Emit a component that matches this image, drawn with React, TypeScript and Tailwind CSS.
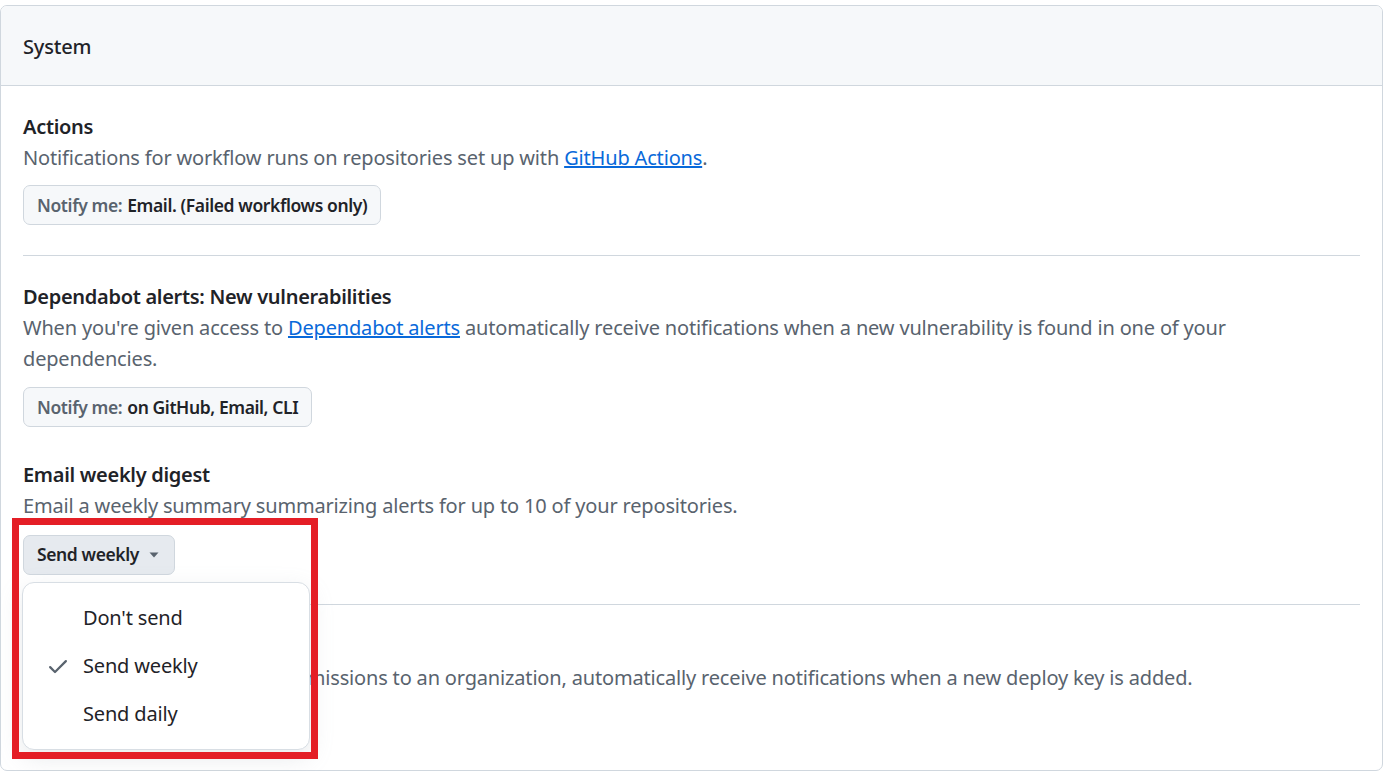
import React from 'react';

const font = { fontFamily: '"Noto Sans", "Open Sans", Arial, sans-serif' };

const NotifyButton: React.FC<{ value: string }> = ({ value }) => (
  <div className="inline-flex h-[40px] items-center rounded-[7px] border border-[#d0d7de] bg-[#f6f8fa] px-[13px] text-[17.5px] font-semibold tracking-[-0.4px]">
    <span className="text-[#59636e]">Notify me:</span>
    <span className="ml-[5px] text-[#1f2328]">{value}</span>
  </div>
);

const options = ["Don't send", 'Send weekly', 'Send daily'];

const App: React.FC = () => {
  return (
    <div className="relative min-h-[771px] bg-white pt-[5px] text-[#1f2328]" style={font}>
      <div className="w-[1383px] h-[766px] overflow-hidden rounded-[7px] border border-[#d0d7de]">
        {/* Header */}
        <div className="flex h-[80px] items-center border-b border-[#d0d7de] bg-[#f6f8fa] px-[22px] pt-[3px]">
          <h2 className="text-[20px] font-medium tracking-[-0.2px]">System</h2>
        </div>

        <div className="px-[22px] text-[20px] leading-[31px] tracking-[-0.17px]">
          {/* Actions */}
          <div className="border-b border-[#d0d7de] pt-[25px] pb-[30px]">
            <h3 className="font-semibold tracking-[-0.3px]">Actions</h3>
            <p className="text-[#59636e]">
              Notifications for workflow runs on repositories set up with{' '}
              <a className="text-[#0969da] underline">GitHub Actions</a>.
            </p>
            <div className="mt-[12px]">
              <NotifyButton value="Email. (Failed workflows only)" />
            </div>
          </div>

          {/* Dependabot */}
          <div className="border-b border-[#d0d7de] pt-[25px] pb-[29px]">
            <h3 className="font-semibold tracking-[-0.3px]">Dependabot alerts: New vulnerabilities</h3>
            <p className="max-w-[1230px] text-[#59636e]">
              When you're given access to{' '}
              <a className="text-[#0969da] underline">Dependabot alerts</a> automatically receive notifications
              when a new vulnerability is found in one of your dependencies.
            </p>
            <div className="mt-[13px]">
              <NotifyButton value="on GitHub, Email, CLI" />
            </div>

            <h3 className="mt-[32px] font-semibold tracking-[-0.3px]">Email weekly digest</h3>
            <p className="text-[#59636e]">
              Email a weekly summary summarizing alerts for up to 10 of your repositories.
            </p>
            <div className="relative mt-[14px]">
              <button className="inline-flex h-[40px] items-center rounded-[7px] border border-[#d0d7de] bg-[#e6eaef] pl-[13px] pr-[15px] text-[17.5px] leading-none font-semibold tracking-[-0.4px] text-[#1f2328]">
                Send weekly
                <svg width="10" height="6" viewBox="0 0 10 6" className="ml-[10px]">
                  <path d="M0.5 0.5h9L5 5.5Z" fill="#59636e" />
                </svg>
              </button>
            </div>
          </div>

          {/* Deploy keys */}
          <div className="pt-[26px]">
            <h3 className="font-semibold tracking-[-0.3px]">Deploy keys</h3>
            <p className="text-[#59636e]">
              When you are given admin permissions to an organization, automatically receive notifications when a new
              deploy key is added.
            </p>
          </div>
        </div>
      </div>

      {/* Dropdown menu */}
      <div className="absolute left-[22px] top-[582px] w-[288px] rounded-[12px] border border-[#d8dee4] bg-white py-[11px] shadow-[0_8px_24px_rgba(140,149,159,0.2)]">
        {options.map((o) => (
          <div key={o} className="flex h-[48px] items-center text-[20px] tracking-[-0.17px] text-[#1f2328]">
            <div className="flex w-[60px] justify-end pr-[13px]">
              {o === 'Send weekly' && (
                <svg width="24" height="24" viewBox="0 0 16 16" fill="#59636e">
                  <path d="M13.78 4.22a.75.75 0 0 1 0 1.06l-7.25 7.25a.75.75 0 0 1-1.06 0L2.22 9.28a.751.751 0 0 1 .018-1.042.751.751 0 0 1 1.042-.018L6 10.94l6.72-6.72a.75.75 0 0 1 1.06 0Z" />
                </svg>
              )}
            </div>
            <span>{o}</span>
          </div>
        ))}
      </div>

      {/* Annotation highlight */}
      <div className="pointer-events-none absolute left-[12px] top-[518px] h-[241px] w-[306px] border-[7px] border-[#e41e26]" />
    </div>
  );
};

export default App;
